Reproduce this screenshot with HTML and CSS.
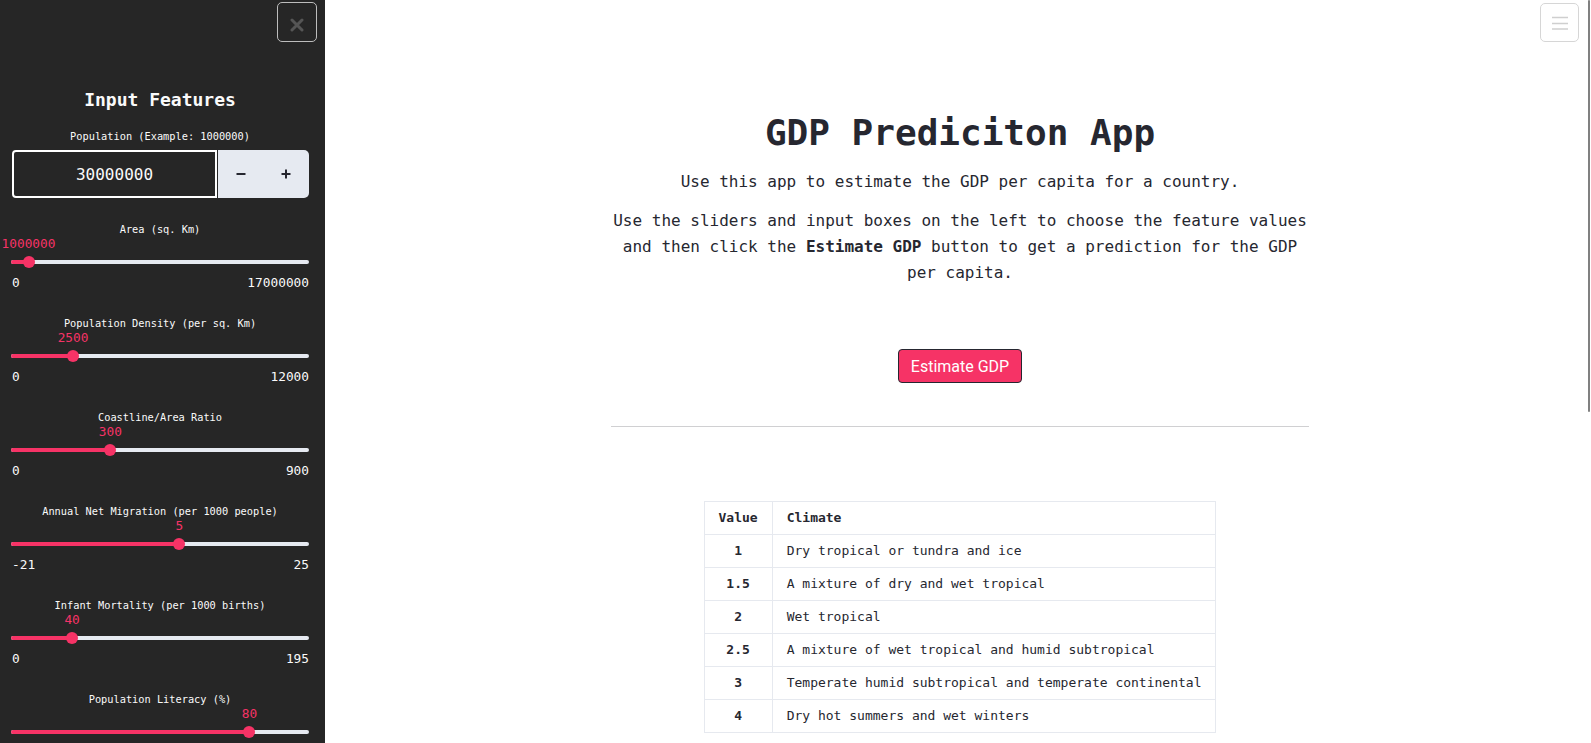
FILE: index.html
```html
<!DOCTYPE html>
<html>
<head>
<meta charset="utf-8">
<title>GDP Prediciton App</title>
<link rel="stylesheet" href="styles.css">
</head>
<body>
<aside class="sidebar">
  <div class="sb-head">
    <button class="close-btn" aria-label="Close">
      <svg width="14" height="14" viewBox="0 0 14 14"><path d="M2 2L12 12M12 2L2 12" stroke="#555" stroke-width="3" stroke-linecap="round"/></svg>
    </button>
  </div>
  <div class="sb-body">
    <h2 class="sb-title">Input Features</h2>
    <div class="field-label">Population (Example: 1000000)</div>
    <div class="numinput">
      <div class="num-field">30000000</div>
      <div class="stepper">
        <span class="step"><svg width="10" height="10" viewBox="0 0 10 10"><path d="M0.5 5H9.5" stroke="#262730" stroke-width="2"/></svg></span>
        <span class="step"><svg width="10" height="10" viewBox="0 0 10 10"><path d="M0.5 5H9.5M5 0.5V9.5" stroke="#262730" stroke-width="2"/></svg></span>
      </div>
    </div>

    <div class="slider">
      <div class="s-label">Area (sq. Km)</div>
      <div class="s-value-row"><span class="s-value" style="left:5.882%">1000000</span></div>
      <div class="s-track-area"><div class="s-track"><div class="s-fill" style="width:5.882%"></div><div class="s-thumb" style="left:5.882%"></div></div></div>
      <div class="s-ticks"><span>0</span><span>17000000</span></div>
    </div>

    <div class="slider">
      <div class="s-label">Population Density (per sq. Km)</div>
      <div class="s-value-row"><span class="s-value" style="left:20.833%">2500</span></div>
      <div class="s-track-area"><div class="s-track"><div class="s-fill" style="width:20.833%"></div><div class="s-thumb" style="left:20.833%"></div></div></div>
      <div class="s-ticks"><span>0</span><span>12000</span></div>
    </div>

    <div class="slider">
      <div class="s-label">Coastline/Area Ratio</div>
      <div class="s-value-row"><span class="s-value" style="left:33.333%">300</span></div>
      <div class="s-track-area"><div class="s-track"><div class="s-fill" style="width:33.333%"></div><div class="s-thumb" style="left:33.333%"></div></div></div>
      <div class="s-ticks"><span>0</span><span>900</span></div>
    </div>

    <div class="slider">
      <div class="s-label">Annual Net Migration (per 1000 people)</div>
      <div class="s-value-row"><span class="s-value" style="left:56.522%">5</span></div>
      <div class="s-track-area"><div class="s-track"><div class="s-fill" style="width:56.522%"></div><div class="s-thumb" style="left:56.522%"></div></div></div>
      <div class="s-ticks"><span>-21</span><span>25</span></div>
    </div>

    <div class="slider">
      <div class="s-label">Infant Mortality (per 1000 births)</div>
      <div class="s-value-row"><span class="s-value" style="left:20.513%">40</span></div>
      <div class="s-track-area"><div class="s-track"><div class="s-fill" style="width:20.513%"></div><div class="s-thumb" style="left:20.513%"></div></div></div>
      <div class="s-ticks"><span>0</span><span>195</span></div>
    </div>

    <div class="slider">
      <div class="s-label">Population Literacy (%)</div>
      <div class="s-value-row"><span class="s-value" style="left:80%">80</span></div>
      <div class="s-track-area"><div class="s-track"><div class="s-fill" style="width:80%"></div><div class="s-thumb" style="left:80%"></div></div></div>
      <div class="s-ticks"><span>0</span><span>100</span></div>
    </div>
  </div>
</aside>

<main class="main">
  <div class="content">
    <h1 class="title">GDP Prediciton App</h1>
    <p class="lead">Use this app to estimate the GDP per capita for a country.</p>
    <p class="desc">Use the sliders and input boxes on the left to choose the feature values and then click the <strong>Estimate GDP</strong> button to get a prediction for the GDP per capita.</p>
    <div class="btn-row"><button class="primary-btn">Estimate GDP</button></div>
    <hr class="divider">
    <table class="climate">
      <thead>
        <tr><th class="c-val">Value</th><th>Climate</th></tr>
      </thead>
      <tbody>
        <tr><td class="c-val">1</td><td>Dry tropical or tundra and ice</td></tr>
        <tr><td class="c-val">1.5</td><td>A mixture of dry and wet tropical</td></tr>
        <tr><td class="c-val">2</td><td>Wet tropical</td></tr>
        <tr><td class="c-val">2.5</td><td>A mixture of wet tropical and humid subtropical</td></tr>
        <tr><td class="c-val">3</td><td>Temperate humid subtropical and temperate continental</td></tr>
        <tr><td class="c-val">4</td><td>Dry hot summers and wet winters</td></tr>
      </tbody>
    </table>
  </div>
</main>

<button class="menu-btn" aria-label="Menu">
  <svg width="16" height="14" viewBox="0 0 16 14"><path d="M0 1.5H16M0 7.5H16M0 13H16" stroke="#cfcfcf" stroke-width="1.6"/></svg>
</button>
<div class="scroll-thumb"></div>
</body>
</html>
```

FILE: styles.css
```css
* { box-sizing: border-box; }

html, body {
  margin: 0;
  padding: 0;
  height: 100%;
}

body {
  display: flex;
  overflow: hidden;
  font-family: "DejaVu Sans Mono", monospace;
  color: #262730;
  background: #ffffff;
}

/* ---------- Sidebar ---------- */
.sidebar {
  width: 325px;
  flex-shrink: 0;
  height: 100vh;
  overflow: hidden;
  background: #262626;
  color: #fafafa;
}

.sb-head {
  display: flex;
  justify-content: flex-end;
  padding: 2px 8px 0 0;
}

.close-btn {
  width: 40px;
  height: 40px;
  padding: 5px 0 0 0;
  margin: 0;
  display: flex;
  align-items: center;
  justify-content: center;
  background: transparent;
  border: 1px solid #bdbdbd;
  border-radius: 5px;
}

.sb-body {
  padding: 0 16px 0 11px;
}

.sb-title {
  margin: 47px 0 0 0;
  font-size: 18px;
  line-height: 22px;
  font-weight: bold;
  text-align: center;
  color: #fafafa;
}

.field-label {
  margin-top: 18px;
  font-size: 10.3px;
  line-height: 14px;
  text-align: center;
  color: #fafafa;
}

.numinput {
  margin-top: 7px;
  height: 48px;
  display: flex;
  padding-left: 1px;
}

.num-field {
  flex: 1;
  display: flex;
  align-items: center;
  justify-content: center;
  border: 2px solid #ffffff;
  border-radius: 4px 0 0 4px;
  font-size: 16px;
  color: #fafafa;
  margin-right: 1px;
}

.stepper {
  width: 91px;
  display: flex;
  background: #e6eaf1;
  border-radius: 0 5px 5px 0;
}

.step {
  flex: 1;
  display: flex;
  align-items: center;
  justify-content: center;
}

.slider {
  height: 94px;
}
.numinput + .slider {
  margin-top: 24px;
}

.s-label {
  height: 14px;
  font-size: 10.3px;
  line-height: 14px;
  text-align: center;
  white-space: nowrap;
}

.s-value-row {
  position: relative;
  height: 15px;
}

.s-value {
  position: absolute;
  top: 0;
  transform: translateX(-50%);
  font-size: 12.8px;
  line-height: 15px;
  color: #f63366;
  white-space: nowrap;
}

.s-track-area {
  height: 21px;
  display: flex;
  align-items: center;
}

.s-track {
  position: relative;
  width: 100%;
  height: 4px;
  border-radius: 2px;
  background: #e6eaf1;
}

.s-fill {
  height: 100%;
  border-radius: 2px;
  background: #f63366;
}

.s-thumb {
  position: absolute;
  top: 50%;
  width: 12px;
  height: 12px;
  margin: -6px 0 0 -6px;
  border-radius: 50%;
  background: #f63366;
}

.s-ticks {
  margin-top: 3px;
  height: 15px;
  display: flex;
  justify-content: space-between;
  font-size: 12.8px;
  line-height: 15px;
  color: #fafafa;
  padding-left: 1px;
}

/* ---------- Main ---------- */
.main {
  flex: 1;
  height: 100vh;
  overflow: hidden;
  padding: 111px 0 0 4px;
}

.content {
  width: 698px;
  margin: 0 auto;
  text-align: center;
}

.title {
  margin: 0;
  font-size: 36px;
  line-height: 44px;
  font-weight: bold;
  color: #262730;
}

.lead {
  margin: 14px 0 0 0;
  font-size: 16px;
  line-height: 26px;
}

.desc {
  margin: 13px 0 0 0;
  font-size: 16px;
  line-height: 26px;
}

.desc strong {
  font-weight: bold;
}

.btn-row {
  margin-top: 63px;
  display: flex;
  justify-content: center;
}

.primary-btn {
  height: 34px;
  padding: 0 12px;
  margin: 0;
  background: #f63366;
  color: #ffffff;
  font-family: Roboto, "Noto Sans", sans-serif;
  font-size: 16px;
  border: 1px solid #262730;
  border-radius: 4px;
}

.divider {
  margin: 43px 0 0 0;
  border: 0;
  height: 1px;
  background: #d0d0d2;
}

.climate {
  margin: 74px auto 0 auto;
  border-collapse: collapse;
  font-size: 13px;
  line-height: 20px;
  color: #262730;
  text-align: left;
}

.climate th,
.climate td {
  border: 1px solid #e6e9ef;
  padding: 6px 14px;
  white-space: nowrap;
}

.climate th {
  font-weight: bold;
}

.climate .c-val {
  text-align: center;
  font-weight: bold;
  width: 67px;
}

/* ---------- Overlays ---------- */
.menu-btn {
  position: fixed;
  top: 3px;
  right: 12px;
  width: 39px;
  height: 39px;
  padding: 0;
  margin: 0;
  display: flex;
  align-items: center;
  justify-content: center;
  background: #ffffff;
  border: 1px solid #d6d6d6;
  border-radius: 5px;
}

.scroll-thumb {
  position: fixed;
  top: 0;
  right: 1px;
  width: 2px;
  height: 412px;
  background: #808080;
  border-radius: 1px;
}
```
